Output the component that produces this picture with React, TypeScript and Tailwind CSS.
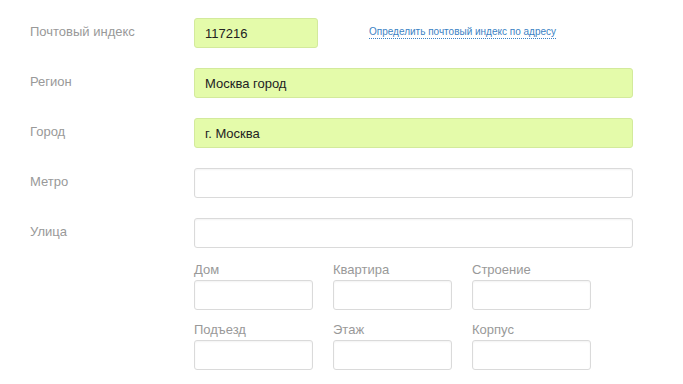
import React from 'react';

interface Field {
  label: string;
  value?: string;
  filled?: boolean;
  width: string;
}

const mainFields: Field[] = [
  { label: 'Почтовый индекс', value: '117216', filled: true, width: 'w-[124px]' },
  { label: 'Регион', value: 'Москва город', filled: true, width: 'w-[439px]' },
  { label: 'Город', value: 'г. Москва', filled: true, width: 'w-[439px]' },
  { label: 'Метро', width: 'w-[439px]' },
  { label: 'Улица', width: 'w-[439px]' },
];

const smallFields = ['Дом', 'Квартира', 'Строение', 'Подъезд', 'Этаж', 'Корпус'];

const Input: React.FC<{ value?: string; filled?: boolean; className?: string }> = ({ value, filled, className }) => (
  <div
    className={`h-[30px] rounded-[3px] border px-[10px] pt-[1px] flex items-center text-[13px] text-[#222] ${
      filled
        ? 'bg-[#e4fbaa] border-[#d3ea9c]'
        : 'bg-white border-[#dadada] shadow-[inset_0_1px_2px_rgba(0,0,0,0.05)]'
    } ${className ?? ''}`}
  >
    {value}
  </div>
);

export default function App() {
  return (
    <div className="w-[683px] h-[384px] bg-white pt-[18px] pl-[30px] font-['Liberation_Sans',Arial,sans-serif] overflow-hidden">
      <div className="flex flex-col gap-[20px]">
        {mainFields.map((f, i) => (
          <div key={f.label} className="flex items-start">
            <div className="w-[164px] text-[13px] leading-[27px] text-[#999]">{f.label}</div>
            <Input value={f.value} filled={f.filled} className={f.width} />
            {i === 0 && (
              <a className="ml-[51px] mt-[7px] text-[10px] leading-[13px] text-[#3b82c4] border-b border-dotted border-[#3b82c4]">
                Определить почтовый индекс по адресу
              </a>
            )}
          </div>
        ))}
      </div>

      {/* дом / квартира / строение */}
      <div className="ml-[164px] mt-[14px] grid grid-cols-[119px_119px_119px] gap-x-[20px] gap-y-[12px]">
        {smallFields.map((name) => (
          <div key={name} className="flex flex-col">
            <div className="text-[13px] leading-[16px] text-[#999] mb-[2px]">{name}</div>
            <Input />
          </div>
        ))}
      </div>
    </div>
  );
}
